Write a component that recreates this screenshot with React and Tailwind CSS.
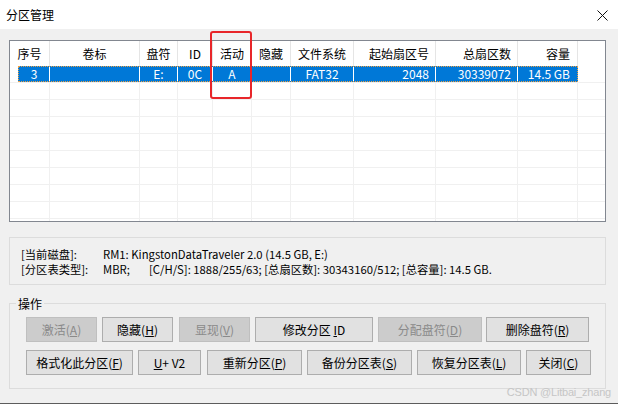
import React from "react";

const cjk = "font-['Noto_Sans_CJK_SC','Noto_Sans',sans-serif]";

const cols = [
  { h: "序号", w: "w-[40px]", al: "justify-center" },
  { h: "卷标", w: "w-[90px]", al: "justify-center" },
  { h: "盘符", w: "w-[38px]", al: "justify-center" },
  { h: "ID", w: "w-[35px]", al: "justify-center" },
  { h: "活动", w: "w-[39px]", al: "justify-center" },
  { h: "隐藏", w: "w-[39px]", al: "justify-center" },
  { h: "文件系统", w: "w-[63px]", al: "justify-center" },
  { h: "起始扇区号", w: "w-[82px]", al: "justify-end pr-[6px]" },
  { h: "总扇区数", w: "w-[82px]", al: "justify-end pr-[6px]" },
  { h: "容量", w: "w-[60px]", al: "justify-end pr-[7px]" },
];

const row = ["3", "", "E:", "0C", "A", "", "FAT32", "2048", "30339072", "14.5 GB"];

const Btn = ({ w, disabled, children }) => (
  <div
    className={`${w} h-[25px] flex items-center justify-center border text-[12px] leading-none ${
      disabled
        ? "bg-[#cccccc] border-[#bfbfbf] text-[#8a8a8a]"
        : "bg-[#e1e1e1] border-[#adadad] text-black"
    }`}
  >
    {children}
  </div>
);

export default function App() {
  return (
    <div className={`relative w-[618px] h-[404px] bg-[#f0f0f0] border-b border-[#5c5c5c] overflow-hidden ${cjk}`}>
      {/* title bar */}
      <div className="h-[29px] bg-white flex items-center justify-between pl-[6px] pr-[10px]">
        <span className="text-[12px] text-black leading-none">分区管理</span>
        <svg width="11" height="11" viewBox="0 0 11 11" className="mt-[1px]">
          <path d="M0.5 0.5 L10.5 10.5 M10.5 0.5 L0.5 10.5" stroke="#111" strokeWidth="1" />
        </svg>
      </div>

      {/* partition list */}
      <div className="mt-[11px] ml-[9px] w-[597px] h-[182px] border border-[#828790] bg-white flex flex-col">
        <div className="h-[25px] flex shrink-0">
          {cols.map((c) => (
            <div key={c.h} className={`${c.w} ${c.al} h-full flex items-center border-r border-[#e5e5e5] text-[12px] text-black`}>
              {c.h}
            </div>
          ))}
        </div>

        {/* selected row */}
        <div className="h-[17px] flex shrink-0 border-b border-[#f0f0f0]">
          <div className="w-[8px] h-full" />
          <div className="flex h-[16px] bg-[#0078d7] border border-dotted border-[#f0a040] text-white text-[12px]">
            {row.map((v, i) => (
              <div
                key={i}
                className={`${i === 0 ? "w-[31px]" : i === 9 ? "w-[59px]" : cols[i].w} ${cols[i].al} ${
                  i === 9 ? "" : "border-r border-white"
                } h-full flex items-center leading-none`}
              >
                {v}
              </div>
            ))}
          </div>
        </div>

        {Array.from({ length: 8 }).map((_, r) => (
          <div key={r} className="h-[17px] flex shrink-0 border-b border-[#f0f0f0]">
            {cols.map((c) => (
              <div key={c.h} className={`${c.w} h-full border-r border-[#f0f0f0]`} />
            ))}
          </div>
        ))}
        <div className="flex flex-1">
          {cols.map((c) => (
            <div key={c.h} className={`${c.w} h-full border-r border-[#f0f0f0]`} />
          ))}
        </div>
      </div>

      {/* disk info */}
      <div className="mt-[15px] ml-[9px] w-[597px] h-[48px] border border-[#dcdcdc] pl-[11px] pt-[9px] text-[11.3px] leading-[14px] text-black">
        <div className="flex whitespace-nowrap">
          <span className="w-[82px]">[当前磁盘]:</span>
          <span>RM1: KingstonDataTraveler 2.0 (14.5 GB, E:)</span>
        </div>
        <div className="flex whitespace-nowrap mt-[1px]">
          <span className="w-[82px]">[分区表类型]:</span>
          <span className="w-[46px]">MBR;</span>
          <span>[C/H/S]: 1888/255/63; [总扇区数]: 30343160/512; [总容量]: 14.5 GB.</span>
        </div>
      </div>

      {/* operations */}
      <div className="relative mt-[18px] ml-[9px] w-[597px] h-[86px] border border-[#dcdcdc] pl-[16px] pt-[13px]">
        <span className="absolute -top-[8px] left-[6px] px-[2px] bg-[#f0f0f0] text-[12px] leading-[15px] text-black">操作</span>
        <div className="flex">
          <Btn w="w-[71px]" disabled>激活(<u>A</u>)</Btn>
          <div className="ml-[5px]"><Btn w="w-[71px]">隐藏(<u>H</u>)</Btn></div>
          <div className="ml-[6px]"><Btn w="w-[71px]" disabled>显现(<u>V</u>)</Btn></div>
          <div className="ml-[5px]"><Btn w="w-[118px]">修改分区&nbsp;<u>I</u>D</Btn></div>
          <div className="ml-[5px]"><Btn w="w-[104px]" disabled>分配盘符(<u>D</u>)</Btn></div>
          <div className="ml-[4px]"><Btn w="w-[103px]">删除盘符(<u>R</u>)</Btn></div>
        </div>
        <div className="flex mt-[8px]">
          <Btn w="w-[107px]">格式化此分区(<u>F</u>)</Btn>
          <div className="ml-[5px]"><Btn w="w-[63px]"><u>U</u>+ V2</Btn></div>
          <div className="ml-[6px]"><Btn w="w-[95px]">重新分区(<u>P</u>)</Btn></div>
          <div className="ml-[5px]"><Btn w="w-[105px]">备份分区表(<u>S</u>)</Btn></div>
          <div className="ml-[5px]"><Btn w="w-[104px]">恢复分区表(<u>L</u>)</Btn></div>
          <div className="ml-[5px]"><Btn w="w-[65px]">关闭(<u>C</u>)</Btn></div>
        </div>
      </div>

      {/* annotation box */}
      <div className="absolute left-[210px] top-[31px] w-[42px] h-[68px] border-2 border-[#e8262a] rounded-[3px]" />

      {/* watermark */}
      <span className="absolute right-[7px] top-[386px] whitespace-nowrap text-[11px] leading-[13px] tracking-[-0.2px] text-[#c6c6c6] font-['Liberation_Sans',sans-serif]">
        CSDN @Litbai_zhang
      </span>
    </div>
  );
}
